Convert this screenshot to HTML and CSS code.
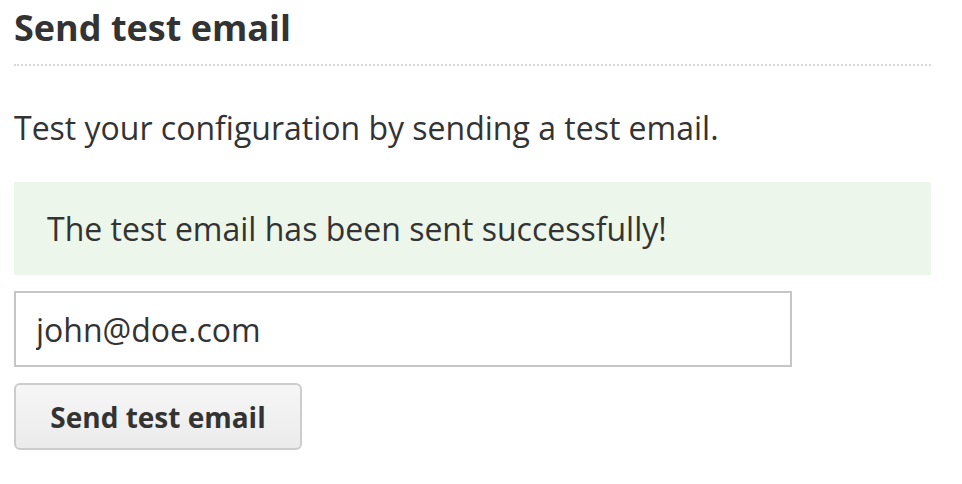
FILE: index.html
```html
<!DOCTYPE html>
<html>
<head>
<meta charset="utf-8">
<link rel="stylesheet" href="styles.css">
</head>
<body>
<div class="panel">
  <h2 class="title">Send test email</h2>
  <p class="intro">Test your configuration by sending a test email.</p>
  <div class="alert">The test email has been sent successfully!</div>
  <input class="field" type="text" value="john@doe.com">
  <div class="actions"><button class="btn">Send test email</button></div>
</div>
</body>
</html>
```
FILE: styles.css
```css
html, body {
  margin: 0;
  padding: 0;
  background: #fff;
}
body {
  font-family: "Open Sans", "Liberation Sans", sans-serif;
  color: #333;
}
.panel {
  width: 917px;
  padding: 0 0 0 14px;
}
.title {
  margin: 0;
  font-size: 36px;
  font-weight: 700;
  line-height: 56px;
  padding-bottom: 8px;
  border-bottom: 2px dotted #d8d8d8;
}
.intro {
  margin: 0;
  padding-top: 40px;
  font-size: 32px;
  line-height: 44px;
}
.alert {
  margin-top: 32px;
  height: 93px;
  box-sizing: border-box;
  padding: 0 33px;
  display: flex;
  align-items: center;
  background: #ecf6eb;
  font-size: 32px;
}
.field {
  display: block;
  margin: 16px 0 0 0;
  width: 778px;
  height: 76px;
  box-sizing: border-box;
  border: 2px solid #c6c6c6;
  padding: 0 20px;
  font-family: "Open Sans", "Liberation Sans", sans-serif;
  font-size: 32px;
  color: #333;
  outline: none;
}
.actions {
  margin-top: 16px;
}
.btn {
  width: 288px;
  height: 67px;
  box-sizing: border-box;
  border: 2px solid #cccccc;
  border-radius: 6px;
  background: linear-gradient(#f6f6f6, #ebebeb);
  font-family: "Open Sans", "Liberation Sans", sans-serif;
  font-weight: 700;
  font-size: 28px;
  color: #333;
  padding: 0;
}
```
